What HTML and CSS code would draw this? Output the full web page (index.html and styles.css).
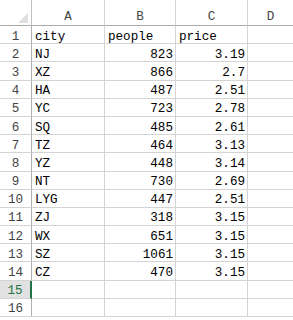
FILE: index.html
```html
<!DOCTYPE html>
<html>
<head>
<meta charset="utf-8">
<link rel="stylesheet" href="styles.css">
</head>
<body>
<div class="sheet">
  <div class="corner"><span class="tri"></span></div>
  <div class="ch">A</div><div class="ch">B</div><div class="ch">C</div><div class="ch last">D</div>

  <div class="rh">1</div><div class="c">city</div><div class="c">people</div><div class="c">price</div><div class="c last"></div>
  <div class="rh">2</div><div class="c">NJ</div><div class="c n">823</div><div class="c n">3.19</div><div class="c last"></div>
  <div class="rh">3</div><div class="c">XZ</div><div class="c n">866</div><div class="c n">2.7</div><div class="c last"></div>
  <div class="rh">4</div><div class="c">HA</div><div class="c n">487</div><div class="c n">2.51</div><div class="c last"></div>
  <div class="rh">5</div><div class="c">YC</div><div class="c n">723</div><div class="c n">2.78</div><div class="c last"></div>
  <div class="rh">6</div><div class="c">SQ</div><div class="c n">485</div><div class="c n">2.61</div><div class="c last"></div>
  <div class="rh">7</div><div class="c">TZ</div><div class="c n">464</div><div class="c n">3.13</div><div class="c last"></div>
  <div class="rh">8</div><div class="c">YZ</div><div class="c n">448</div><div class="c n">3.14</div><div class="c last"></div>
  <div class="rh">9</div><div class="c">NT</div><div class="c n">730</div><div class="c n">2.69</div><div class="c last"></div>
  <div class="rh">10</div><div class="c">LYG</div><div class="c n">447</div><div class="c n">2.51</div><div class="c last"></div>
  <div class="rh">11</div><div class="c">ZJ</div><div class="c n">318</div><div class="c n">3.15</div><div class="c last"></div>
  <div class="rh">12</div><div class="c">WX</div><div class="c n">651</div><div class="c n">3.15</div><div class="c last"></div>
  <div class="rh">13</div><div class="c">SZ</div><div class="c n">1061</div><div class="c n">3.15</div><div class="c last"></div>
  <div class="rh">14</div><div class="c">CZ</div><div class="c n">470</div><div class="c n">3.15</div><div class="c last"></div>
  <div class="rh sel">15</div><div class="c"></div><div class="c"></div><div class="c"></div><div class="c last"></div>
  <div class="rh">16</div><div class="c"></div><div class="c"></div><div class="c"></div><div class="c last"></div>
</div>
</body>
</html>
```

FILE: styles.css
```css
html, body {
  margin: 0;
  padding: 0;
  background: #ffffff;
  overflow: hidden;
}
.sheet {
  display: grid;
  grid-template-columns: 32px 73px 71px 72px 1fr;
  grid-template-rows: 26px;
  grid-auto-rows: 18.2px;
  width: 293px;
  font-family: "Liberation Mono", "DejaVu Sans Mono", monospace;
  font-size: 12.6px;
  color: #000;
}
.sheet > div {
  box-sizing: border-box;
  border-right: 1px solid #d4d4d4;
  border-bottom: 1px solid #d4d4d4;
  display: flex;
  align-items: center;
  padding-top: 4px;
  white-space: nowrap;
  overflow: hidden;
}
.corner {
  position: relative;
  border-right-color: #c0c0c0 !important;
  border-bottom-color: #ababab !important;
}
.tri {
  position: absolute;
  right: 3px;
  bottom: 2px;
  width: 0;
  height: 0;
  border-left: 10px solid transparent;
  border-bottom: 10px solid #dfdfdf;
}
.sheet > .ch {
  justify-content: center;
  padding-top: 8px;
  color: #444;
  border-bottom-color: #ababab;
}
.rh {
  justify-content: center;
  color: #444;
  border-right-color: #b0b0b0 !important;
}
.rh.sel {
  background: #e1e1e1;
  color: #217346;
  border-right: 2px solid #217346 !important;
}
.sheet > .c {
  padding-left: 3px;
  padding-right: 2px;
}
.c.n {
  justify-content: flex-end;
}
.last {
  border-right: none !important;
}
```
